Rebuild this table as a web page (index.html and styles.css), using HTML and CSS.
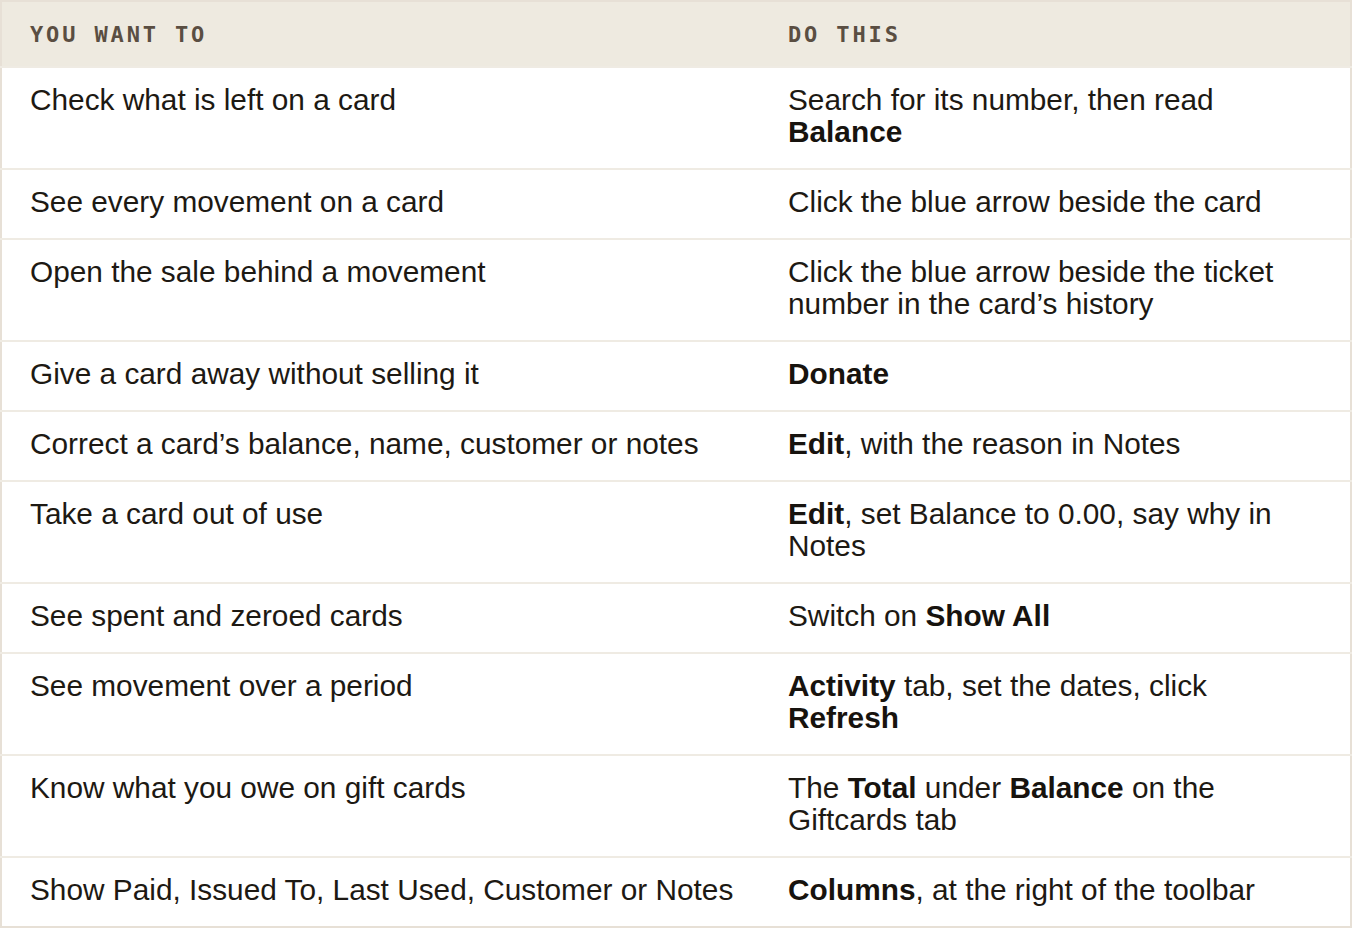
FILE: index.html
```html
<!DOCTYPE html>
<html lang="en">
<head>
    <meta charset="UTF-8">
    <meta name="viewport" content="width=device-width, initial-scale=1.0">
    <title>Gift cards: quick reference</title>
    <link rel="stylesheet" href="styles.css">
</head>
<body>
    <table class="howto">
        <colgroup>
            <col class="col-want">
            <col class="col-do">
        </colgroup>
        <thead>
            <tr>
                <th>You want to</th>
                <th>Do this</th>
            </tr>
        </thead>
        <tbody>
            <tr>
                <td>Check what is left on a card</td>
                <td>Search for its number, then read <b>Balance</b></td>
            </tr>
            <tr>
                <td>See every movement on a card</td>
                <td>Click the blue arrow beside the card</td>
            </tr>
            <tr>
                <td>Open the sale behind a movement</td>
                <td>Click the blue arrow beside the ticket number in the card’s history</td>
            </tr>
            <tr>
                <td>Give a card away without selling it</td>
                <td><b>Donate</b></td>
            </tr>
            <tr>
                <td>Correct a card’s balance, name, customer or notes</td>
                <td><b>Edit</b>, with the reason in Notes</td>
            </tr>
            <tr>
                <td>Take a card out of use</td>
                <td><b>Edit</b>, set Balance to 0.00, say why in Notes</td>
            </tr>
            <tr>
                <td>See spent and zeroed cards</td>
                <td>Switch on <b>Show All</b></td>
            </tr>
            <tr>
                <td>See movement over a period</td>
                <td><b>Activity</b> tab, set the dates, click <b>Refresh</b></td>
            </tr>
            <tr>
                <td>Know what you owe on gift cards</td>
                <td>The <b>Total</b> under <b>Balance</b> on the Giftcards tab</td>
            </tr>
            <tr>
                <td>Show Paid, Issued To, Last Used, Customer or Notes</td>
                <td><b>Columns</b>, at the right of the toolbar</td>
            </tr>
        </tbody>
    </table>
</body>
</html>
```

FILE: styles.css
```css
* {
    box-sizing: border-box;
}

body {
    margin: 0;
    background: #ffffff;
    font-family: "Liberation Sans", Arial, sans-serif;
    color: #1d1913;
}

.howto {
    width: 1352px;
    border-collapse: collapse;
    table-layout: fixed;
    border: 2px solid #e7e0d6;
}

.col-want {
    width: 759px;
}

.howto th {
    background: #eeeae0;
    color: #5a4e42;
    font-family: "DejaVu Sans Mono", monospace;
    font-weight: bold;
    font-size: 22px;
    letter-spacing: 0.13em;
    text-transform: uppercase;
    text-align: left;
    line-height: 29px;
    height: 66px;
    padding: 0 28px;
}

.howto td {
    font-size: 29.8px;
    line-height: 32px;
    vertical-align: top;
    padding: 16px 28px 20px;
    border-top: 2px solid #efebe3;
}

.howto td:first-child {
    white-space: nowrap;
}

.howto b {
    font-weight: bold;
    color: #17130e;
}
```
